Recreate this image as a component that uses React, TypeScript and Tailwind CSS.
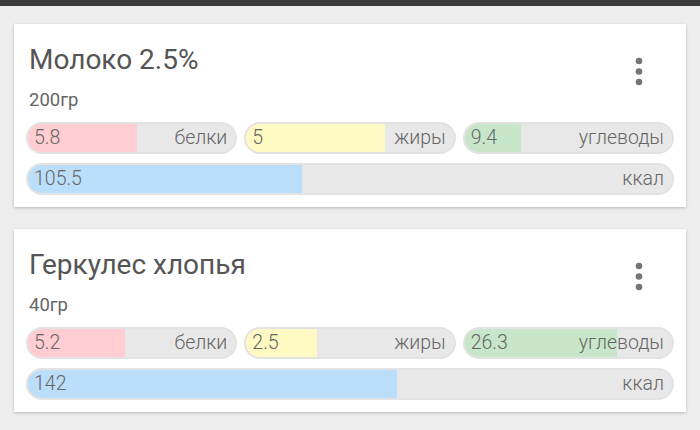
type Meal = {
  name: string;
  weight: string;
  protein: { value: string; fill: number };
  fat: { value: string; fill: number };
  carbs: { value: string; fill: number };
  kcal: { value: string; fill: number };
};

const meals: Meal[] = [
  {
    name: 'Молоко 2.5%',
    weight: '200гр',
    protein: { value: '5.8', fill: 52.6 },
    fat: { value: '5', fill: 66.8 },
    carbs: { value: '9.4', fill: 27 },
    kcal: { value: '105.5', fill: 42.5 },
  },
  {
    name: 'Геркулес хлопья',
    weight: '40гр',
    protein: { value: '5.2', fill: 46.9 },
    fat: { value: '2.5', fill: 34.1 },
    carbs: { value: '26.3', fill: 73.5 },
    kcal: { value: '142', fill: 57.3 },
  },
];

function Bar({ value, label, fill, color }: { value: string; label: string; fill: number; color: string }) {
  return (
    <div className="relative h-[32px] rounded-full overflow-hidden bg-[#e8e8e8] border-2 border-[#e3e3e3]">
      <div className={`absolute inset-y-0 left-0 ${color}`} style={{ width: `${fill}%` }} />
      <div className="relative h-full flex items-center justify-between pl-[6px] pr-[8px] text-[19.5px] font-light text-[#666] leading-none">
        <span>{value}</span>
        <span>{label}</span>
      </div>
    </div>
  );
}

function MealCard({ meal }: { meal: Meal }) {
  return (
    <div className="bg-white mx-[14px] px-[12px] pb-[12px] shadow-[0_1px_3px_rgba(0,0,0,0.22)]">
      <div className="flex items-start justify-between">
        <div className="pl-[3px] pt-[22px]">
          <h2 className="text-[28px] leading-[28px] text-[#555]">{meal.name}</h2>
          <p className="mt-[17px] text-[18.5px] leading-[18px] text-[#666]">{meal.weight}</p>
        </div>
        <div className="mt-[33px] mr-[31px]">
          <svg width="8" height="30" viewBox="0 0 8 30">
            <circle cx="4" cy="4" r="3.3" fill="#757575" />
            <circle cx="4" cy="14.5" r="3.3" fill="#757575" />
            <circle cx="4" cy="25" r="3.3" fill="#757575" />
          </svg>
        </div>
      </div>
      <div className="mt-[13px] grid grid-cols-3 gap-[7px]">
        <Bar value={meal.protein.value} label="белки" fill={meal.protein.fill} color="bg-[#ffcdd2]" />
        <Bar value={meal.fat.value} label="жиры" fill={meal.fat.fill} color="bg-[#fff9c4]" />
        <Bar value={meal.carbs.value} label="углеводы" fill={meal.carbs.fill} color="bg-[#c8e6c9]" />
      </div>
      <div className="mt-[9px]">
        <Bar value={meal.kcal.value} label="ккал" fill={meal.kcal.fill} color="bg-[#bbdefb]" />
      </div>
    </div>
  );
}

export default function App() {
  return (
    <div className="w-[700px] h-[430px] bg-[#eeeeee] overflow-hidden" style={{ fontFamily: 'Roboto, "Noto Sans", sans-serif' }}>
      <div className="h-[6px] bg-[#3b3b3b]" />
      <div className="pt-[18px] flex flex-col gap-[22px]">
        {meals.map((m) => (
          <MealCard key={m.name} meal={m} />
        ))}
      </div>
    </div>
  );
}
